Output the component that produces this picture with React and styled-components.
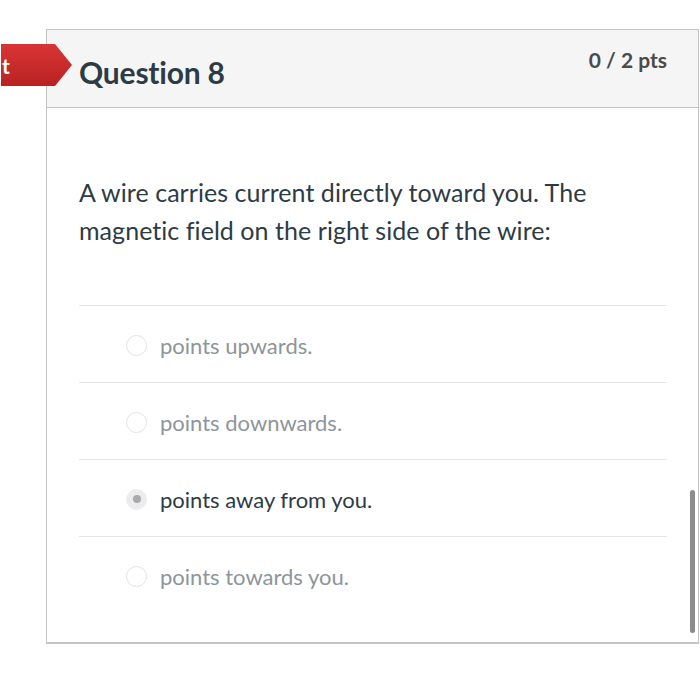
import React from "react";
import styled, { createGlobalStyle } from "styled-components";

const Global = createGlobalStyle`
  html, body { margin: 0; padding: 0; background: #fff; }
  body { font-family: Lato, "Noto Sans", sans-serif; }
`;

const Page = styled.div`
  position: relative;
  width: 700px;
  height: 673px;
  padding: 29px 0 0 46px;
  box-sizing: border-box;
  overflow: hidden;
`;

const Card = styled.div`
  position: relative;
  width: 653px;
  height: 615px;
  box-sizing: border-box;
  border: 1px solid #c4c4c4;
  border-bottom-width: 2px;
  background: #fff;
`;

const Header = styled.div`
  height: 77px;
  background: #f5f5f5;
  border-bottom: 1px solid #c4c4c4;
  display: flex;
  justify-content: space-between;
  align-items: flex-start;
  padding: 0 31px 0 32px;
`;

const Title = styled.h2`
  margin: 0;
  padding-top: 24px;
  font-size: 30px;
  font-weight: 700;
  color: #2d3b45;
  letter-spacing: -0.2px;
`;

const Points = styled.div`
  padding-top: 17px;
  font-size: 21px;
  font-weight: 700;
  color: #4a4a4a;
`;

const Tag = styled.div`
  position: absolute;
  left: -46px;
  top: 14px;
  width: 71px;
  height: 42px;
  background: linear-gradient(#d93535, #b82222);
  clip-path: polygon(0 0, 54px 0, 71px 50%, 54px 100%, 0 100%);
  color: #fff;
  font-weight: 700;
  font-size: 21px;
  display: flex;
  align-items: center;
  box-sizing: border-box;
`;

const TagText = styled.span`
  margin-left: 1px;
`;

const Body = styled.div`
  padding: 65px 31px 0 32px;
`;

const QuestionText = styled.p`
  margin: 0 0 56px;
  font-size: 25px;
  line-height: 38px;
  color: #2d3b45;
  letter-spacing: 0.05px;
`;

const Answer = styled.div`
  border-top: 1px solid #e6e6e6;
  height: 77px;
  display: flex;
  align-items: center;
  padding-left: 47px;
  gap: 13px;
  padding-top: 2px;
  box-sizing: border-box;
`;

const Radio = styled.span`
  width: 21px;
  height: 21px;
  border-radius: 50%;
  box-sizing: border-box;
  border: 1.5px solid ${(p) => (p.$checked ? "#ececec" : "#e2e2e2")};
  background: ${(p) => (p.$checked ? "#ececec" : "#fff")};
  display: flex;
  align-items: center;
  justify-content: center;
  &::after {
    content: "";
    width: 8px;
    height: 8px;
    border-radius: 50%;
    background: ${(p) => (p.$checked ? "#a9a9ae" : "transparent")};
  }
`;

const AnswerLabel = styled.span`
  font-size: 22px;
  color: ${(p) => (p.$checked ? "#2d3b45" : "#8d959b")};
`;

const Scrollbar = styled.div`
  position: absolute;
  right: 3px;
  top: 460px;
  width: 5px;
  height: 143px;
  border-radius: 3px;
  background: #8c8c8c;
`;

const answers = [
  { text: "points upwards.", checked: false },
  { text: "points downwards.", checked: false },
  { text: "points away from you.", checked: true },
  { text: "points towards you.", checked: false },
];

export default function App() {
  return (
    <>
      <Global />
      <Page>
        <Card>
          <Tag>
            <TagText>t</TagText>
          </Tag>
          <Header>
            <Title>Question 8</Title>
            <Points>0 / 2 pts</Points>
          </Header>
          <Body>
            <QuestionText>
              A wire carries current directly toward you. The
              <br />
              magnetic field on the right side of the wire:
            </QuestionText>
            {answers.map((a) => (
              <Answer key={a.text}>
                <Radio $checked={a.checked} />
                <AnswerLabel $checked={a.checked}>{a.text}</AnswerLabel>
              </Answer>
            ))}
          </Body>
          <Scrollbar />
        </Card>
      </Page>
    </>
  );
}
